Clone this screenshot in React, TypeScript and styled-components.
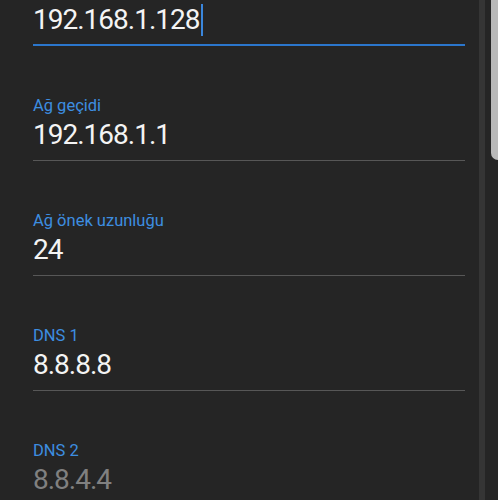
import React from 'react';
import styled, {createGlobalStyle} from "styled-components";


type FieldPropsType = {
    label: string
    value: string
    focused?: boolean
    dimmed?: boolean
}

const GlobalStyle = createGlobalStyle`
    body {
        margin: 0;
        background-color: #252525;
        font-family: Roboto, "Noto Sans", "Liberation Sans", sans-serif;
        overflow: hidden;
    }
`

const Field = (props: FieldPropsType) => {
    return (
        <StyledField $focused={props.focused}>
            <Label>{props.label}</Label>
            <Value $dimmed={props.dimmed}>
                {props.focused ? <Caret>{props.value}</Caret> : props.value}
            </Value>
        </StyledField>
    );
};

const App = () => {
    return (
        <Screen>
            <GlobalStyle/>
            <List>
                <Field label="IP adresi" value="192.168.1.128" focused/>
                <Field label="Ağ geçidi" value="192.168.1.1"/>
                <Field label="Ağ önek uzunluğu" value="24"/>
                <Field label="DNS 1" value="8.8.8.8"/>
                <Field label="DNS 2" value="8.8.4.4" dimmed/>
            </List>
            <Track>
                <Rail/>
                <Thumb/>
            </Track>
        </Screen>
    );
};

export default App;

const Screen = styled.div`
    display: flex;
    height: 500px;
    overflow: hidden;
    background-color: #252525;
`

const List = styled.div`
    width: 478px;
    flex-shrink: 0;
    box-sizing: border-box;
    padding: 0 13px 0 33px;
    margin-top: -69px;
    display: flex;
    flex-direction: column;
`

const StyledField = styled.div<{ $focused?: boolean }>`
    padding-top: 50px;
    padding-bottom: ${props => props.$focused ? '8px' : '9px'};
    border-bottom: ${props => props.$focused ? '2px solid #2b76cc' : '1px solid #575757'};
    display: flex;
    flex-direction: column;
    gap: 3px;
`

const Label = styled.span`
    font-size: 16.5px;
    line-height: 20px;
    color: #3d8ee0;
`

const Value = styled.span<{ $dimmed?: boolean }>`
    font-size: 28px;
    line-height: 32px;
    letter-spacing: -1px;
    color: ${props => props.$dimmed ? '#808080' : '#f4f4f4'};
`

const Caret = styled.span`
    display: inline-block;
    padding-right: 1px;
    border-right: 2px solid #3a86dc;
`

const Track = styled.div`
    flex: 1;
    display: flex;
    align-items: flex-start;
`

const Rail = styled.div`
    width: 6px;
    align-self: stretch;
    margin-left: 1px;
    background-color: #353535;
`

const Thumb = styled.div`
    width: 8px;
    height: 160px;
    margin-left: 6px;
    background-color: #b9b9b9;
    border-bottom-left-radius: 7px;
`
